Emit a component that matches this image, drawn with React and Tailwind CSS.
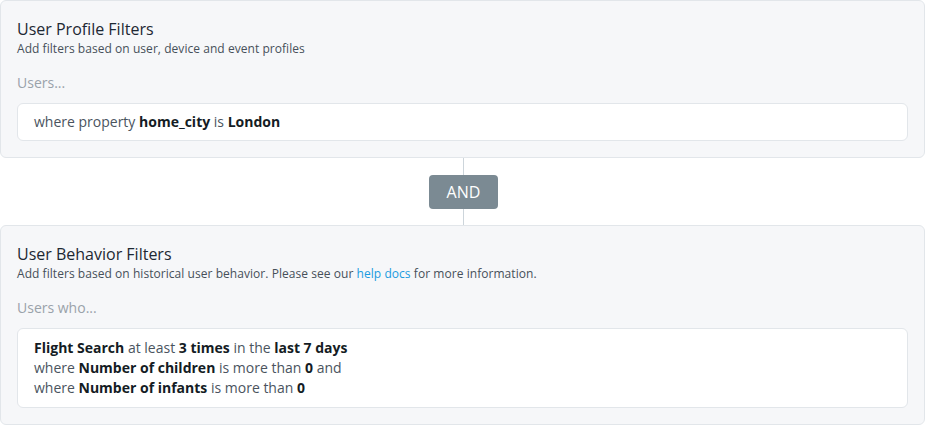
import React from 'react';

const font = { fontFamily: '"Open Sans", "Noto Sans", sans-serif' };

function Panel({ title, subtitle, lead, children }) {
  return (
    <div className="rounded-md border border-[#e2e6ea] bg-[#f6f7f9] px-4 pt-4 pb-4">
      <h2 className="text-[16px] leading-6 text-[#1d2833]">{title}</h2>
      <p className="text-[12px] leading-4 tracking-[0.05px] text-[#46505a]">{subtitle}</p>
      <p className="mt-4 text-[14px] leading-5 text-[#9aa2aa]">{lead}</p>
      <div className="mt-[10px] rounded-md border border-[#e2e6ea] bg-white px-4 text-[14px] leading-5 text-[#4a545e]">
        {children}
      </div>
    </div>
  );
}

const B = ({ children }) => <b className="font-bold text-[#141c24]">{children}</b>;

export default function App() {
  return (
    <div className="w-[925px] bg-white" style={font}>
      <Panel
        title="User Profile Filters"
        subtitle="Add filters based on user, device and event profiles"
        lead="Users..."
      >
        <div className="py-2">
          where property <B>home_city</B> is <B>London</B>
        </div>
      </Panel>

      <div className="flex h-[67px] flex-col items-center pl-[2px]">
        <div className="h-[17px] w-px bg-[#cdd5db]" />
        <div className="flex h-[34px] w-[69px] items-center justify-center rounded-[4px] bg-[#7b8a93] text-[16px] text-white">
          AND
        </div>
        <div className="w-px flex-1 bg-[#cdd5db]" />
      </div>

      <Panel
        title="User Behavior Filters"
        subtitle={
          <>
            Add filters based on historical user behavior. Please see our{' '}
            <a className="text-[#1a9be0]">help docs</a> for more information.
          </>
        }
        lead="Users who..."
      >
        <div className="py-[9px]">
          <div>
            <B>Flight Search</B> at least <B>3 times</B> in the <B>last 7 days</B>
          </div>
          <div>
            where <B>Number of children</B> is more than <B>0</B> and
          </div>
          <div>
            where <B>Number of infants</B> is more than <B>0</B>
          </div>
        </div>
      </Panel>
    </div>
  );
}
